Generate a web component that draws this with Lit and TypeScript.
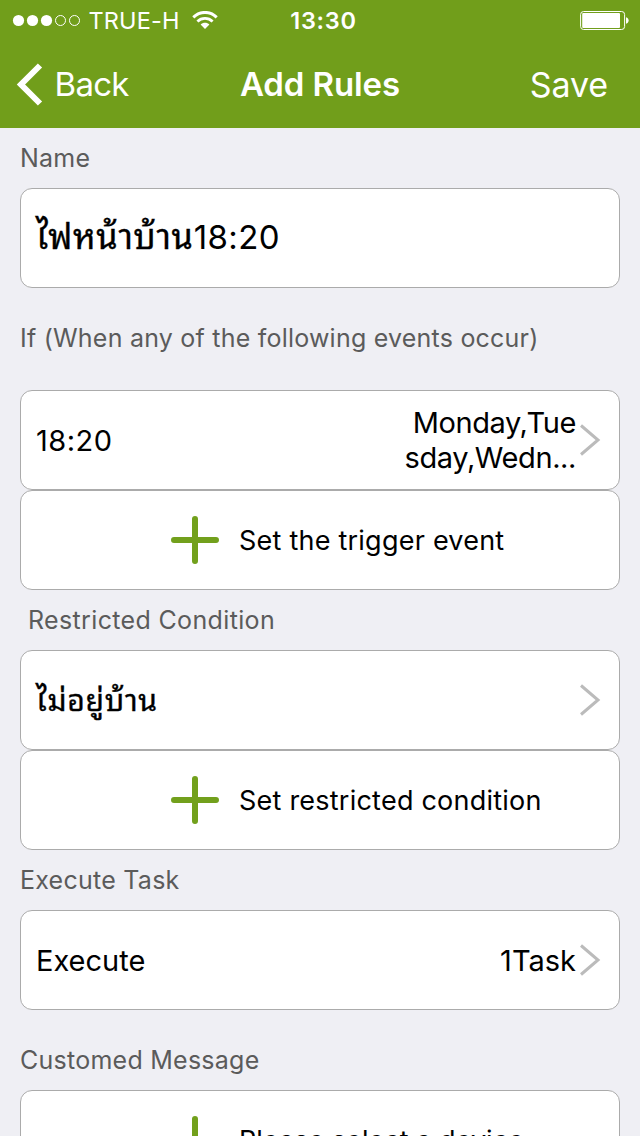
import { LitElement, html, css, svg } from "lit";
import { customElement } from "lit/decorators.js";

const plus = html`<svg class="plus" width="48" height="48" viewBox="0 0 48 48">
  <path d="M24 3V45M3 24H45" stroke="#72a01c" stroke-width="6" stroke-linecap="round" />
</svg>`;

const arrow = html`<svg class="arrow" width="22" height="32" viewBox="0 0 22 32">
  <path d="M1 1.5L18 16L1 30.5" fill="none" stroke="#bbb" stroke-width="3" />
</svg>`;

const dots = [6.5, 20.5, 34.5, 48.5, 62.5].map((x, i) =>
  i < 3
    ? svg`<circle cx=${x} cy="6.500" r="5.6" fill="#fff" />`
    : svg`<circle cx=${x} cy="6.500" r="5" fill="none" stroke="#fff" stroke-width="1" />`
);

@customElement("app-root")
export class AppRoot extends LitElement {
  static styles = css`
    :host {
      display: block;
      height: 1136px;
      overflow: hidden;
      background: #efeff4;
      color: #000;
      font-family: Inter, "Noto Sans", sans-serif;
      white-space: nowrap;
    }
    svg { display: block; flex: none; }
    header { background: #719e1b; color: #fff; height: 128px; }
    .status {
      display: grid;
      grid-template-columns: 1fr auto 1fr;
      align-items: center;
      height: 40px;
      padding: 0 11px 0 12px;
      font-size: 23.5px;
    }
    .carrier { display: flex; align-items: center; }
    .carrier span { margin: 0 12px 0 7.5px; letter-spacing: 0.15px; }
    .clock { font-weight: 600; letter-spacing: 0.7px; padding-left: 6px; }
    .battery { justify-self: end; }
    .nav {
      display: grid;
      grid-template-columns: 1fr auto 1fr;
      align-items: center;
      height: 88px;
      padding: 0 16px;
      font-size: 33px;
    }
    .back { display: flex; align-items: center; gap: 11.5px; letter-spacing: -0.7px; }
    .title { font-weight: 600; letter-spacing: -0.1px; }
    .save { justify-self: end; margin-right: 16px; font-size: 34px; letter-spacing: -0.1px; }
    main { padding: 0 20px; }
    .label {
      display: flex;
      align-items: center;
      height: 60px;
      color: #5b5b5b;
      font-size: 25px;
      letter-spacing: 0.25px;
    }
    .events { height: 100px; padding-bottom: 2px; letter-spacing: 0.22px; }
    .inset { padding-left: 8px; letter-spacing: 0.35px; }
    .message { height: 60px; padding-top: 20px; }
    .card {
      display: flex;
      align-items: center;
      box-sizing: border-box;
      height: 100px;
      padding: 0 18px 0 15px;
      border: 1px solid #ababab;
      border-radius: 12px;
      background: #fff;
      font-size: 29px;
      line-height: 35px;
    }
    .field { font-size: 33px; padding-bottom: 6px; letter-spacing: 0.4px; }
    .thai {
      font-family: "Noto Sans Thai Looped", "Noto Looped Thai", Loma, Waree, Garuda, "Noto Sans Thai", "Noto Sans", sans-serif;
      font-size: 1.04em;
      letter-spacing: 0.7px;
      -webkit-text-stroke: 0.35px #000;
    }
    .condition { padding-bottom: 2px; }
    .time { letter-spacing: 0.5px; }
    .value { margin-left: auto; text-align: right; margin-right: 4px; }
    .days { letter-spacing: -0.4px; }
    .card > .arrow { margin-right: -1px; }
    .empty { margin-left: auto; }
    .add { padding-left: 150px; gap: 20px; font-size: 27px; letter-spacing: 0.23px; }
    .device { letter-spacing: 0.04px; }
  `;

  private add(text: string, cls = "caption") {
    return html`<div class="card add">${plus}<span class=${cls}>${text}</span></div>`;
  }

  render() {
    return html`
      <header>
        <div class="status">
          <div class="carrier">
            <svg width="69" height="13" viewBox="0 0 69 13">${dots}</svg>
            <span>TRUE-H</span>
            <svg width="26" height="19" viewBox="0 0 26 19" fill="none" stroke="#fff">
              <path d="M1.3 6.3C8-.2 18-.2 24.7 6.3" stroke-width="3" />
              <path d="M5.4 10.4C9.7 6.3 16.3 6.3 20.6 10.4" stroke-width="2.8" />
              <path d="M8.6 13.6C11 11.2 15 11.2 17.4 13.6L13 18Z" fill="#fff" stroke="none" />
            </svg>
          </div>
          <div class="clock">13:30</div>
          <svg class="battery" width="49" height="20" viewBox="0 0 49 20">
            <rect x=".6" y="1.5" width="44" height="18" rx="3" fill="none" stroke="#fff" />
            <rect x="2.2" y="3" width="37.8" height="15" rx="1" fill="#fff" />
            <path d="M46 7.2C49.5 8 49.5 13 46 13.8Z" fill="#fff" />
          </svg>
        </div>
        <div class="nav">
          <div class="back">
            <svg width="27" height="43" viewBox="0 0 27 43">
              <path d="M24 2.5L5 21.5L24 40.5" fill="none" stroke="#fff" stroke-width="6" />
            </svg>
            <span>Back</span>
          </div>
          <div class="title">Add Rules</div>
          <div class="save">Save</div>
        </div>
      </header>
      <main>
        <div class="label">Name</div>
        <div class="card field"><span><span class="thai">ไฟหน้าบ้าน</span>18:20</span></div>
        <div class="label events">If (When any of the following events occur)</div>
        <div class="card"><span class="time">18:20</span><span class="value days">Monday,Tue<br />sday,Wedn...</span>${arrow}</div>
        ${this.add("Set the trigger event")}
        <div class="label inset">Restricted Condition</div>
        <div class="card"><span class="condition"><span class="thai">ไม่อยู่บ้าน</span></span><span class="empty"></span>${arrow}</div>
        ${this.add("Set restricted condition")}
        <div class="label">Execute Task</div>
        <div class="card"><span>Execute</span><span class="value">1Task</span>${arrow}</div>
        <div class="label message">Customed Message</div>
        ${this.add("Please select a device", "device")}
      </main>
    `;
  }
}
